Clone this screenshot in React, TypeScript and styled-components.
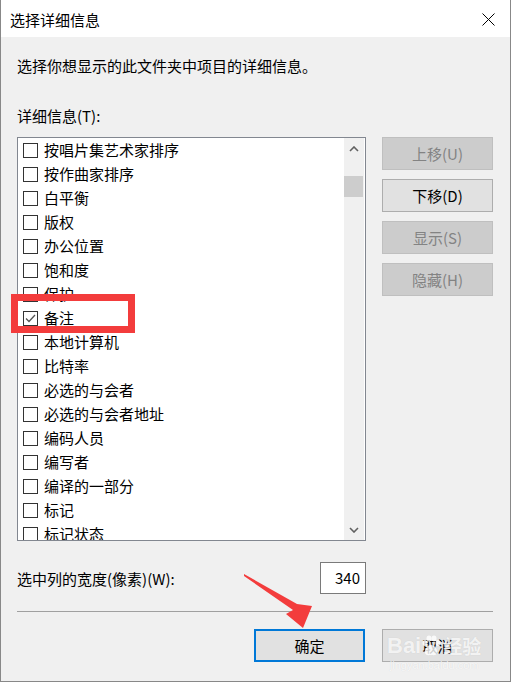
import styled, { createGlobalStyle } from 'styled-components';

const GlobalStyle = createGlobalStyle`
  html, body {
    margin: 0;
    padding: 0;
    background: #fff;
  }
  body {
    font-family: "Noto Sans CJK SC", "Noto Sans", sans-serif;
  }
`;

const Window = styled.div`
  position: relative;
  width: 511px;
  height: 682px;
  box-sizing: border-box;
  border: 1px solid #888;
  border-top: none;
  background: #f0f0f0;
  display: flex;
  flex-direction: column;
  overflow: hidden;
  font-size: 15px;
  color: #000;
`;

const TitleBar = styled.div`
  height: 37px;
  flex: none;
  box-sizing: border-box;
  background: #fff;
  display: flex;
  align-items: center;
  justify-content: space-between;
  padding: 2px 15px 0 9px;
`;

const Title = styled.div`
  line-height: 20px;
`;

const Content = styled.div`
  display: flex;
  flex-direction: column;
  padding: 0 16px;
`;

const Text = styled.div<{ $top: number }>`
  margin-top: ${(p) => p.$top}px;
  line-height: 20px;
  white-space: nowrap;
`;

const MainRow = styled.div`
  margin-top: 11px;
  display: flex;
  height: 404px;
`;

const ListBox = styled.div`
  width: 349px;
  height: 404px;
  box-sizing: border-box;
  border: 1px solid #828790;
  background: #fff;
  display: flex;
`;

const Rows = styled.div`
  width: 326px;
  overflow: hidden;
`;

const Row = styled.div`
  height: 24px;
  display: flex;
  align-items: center;
  padding-left: 5px;
  white-space: nowrap;
  line-height: 24px;
`;

const Box = styled.span`
  width: 15px;
  height: 15px;
  box-sizing: border-box;
  border: 1px solid #333;
  background: #fff;
  margin-right: 6px;
  display: flex;
  align-items: center;
  justify-content: center;
  flex: none;
`;

const ScrollBar = styled.div`
  width: 20px;
  margin-right: 1px;
  background: #f0f0f0;
  display: flex;
  flex-direction: column;
`;

const ScrollArrow = styled.div`
  height: 21px;
  display: flex;
  align-items: center;
  justify-content: center;
  flex: none;
`;

const Track = styled.div`
  flex: 1;
`;

const Thumb = styled.div`
  margin-top: 17px;
  width: 19px;
  height: 21px;
  background: #cdcdcd;
`;

const SideButtons = styled.div`
  margin-left: 16px;
  display: flex;
  flex-direction: column;
  gap: 9px;
`;

const Button = styled.button<{ $disabled?: boolean; $primary?: boolean }>`
  width: 111px;
  height: 33px;
  box-sizing: border-box;
  margin: 0;
  padding: 0;
  font-family: inherit;
  font-size: 15px;
  line-height: 20px;
  background: ${(p) => (p.$disabled ? '#cccccc' : '#e1e1e1')};
  border: ${(p) =>
    p.$primary ? '2px solid #0078d7' : p.$disabled ? '1px solid #bfbfbf' : '1px solid #adadad'};
  color: ${(p) => (p.$disabled ? '#838383' : '#000')};
`;

const WidthRow = styled.div`
  margin-top: 21px;
  width: 349px;
  display: flex;
  align-items: center;
  justify-content: space-between;
`;

const NumberInput = styled.div`
  width: 46px;
  height: 32px;
  box-sizing: border-box;
  border: 1px solid #7a7a7a;
  background: #fff;
  text-align: right;
  padding-right: 5px;
  line-height: 29px;
`;

const Separator = styled.div`
  margin-top: 17px;
  width: 476px;
  height: 1px;
  background: #a0a0a0;
`;

const Footer = styled.div`
  margin-top: 17px;
  display: flex;
  justify-content: flex-end;
  gap: 17px;
  padding-right: 1px;
`;

const Highlight = styled.div`
  position: absolute;
  left: 10px;
  top: 294px;
  width: 124px;
  height: 39px;
  box-sizing: border-box;
  border: 7px solid #f33c3c;
  pointer-events: none;
`;

const ArrowMark = styled.svg`
  position: absolute;
  left: 240px;
  top: 570px;
`;

const Watermark = styled.div`
  position: absolute;
  left: 386px;
  top: 634px;
  color: rgba(255, 255, 255, 0.8);
  text-shadow: 0 0 1px rgba(0, 0, 0, 0.12);
  pointer-events: none;
  display: flex;
  flex-direction: column;
  align-items: center;
`;

const WatermarkMain = styled.div`
  display: flex;
  align-items: center;
  font-family: "Liberation Sans", Arial, sans-serif;
  font-weight: bold;
  font-size: 22px;
  line-height: 24px;
`;

const WatermarkCn = styled.span`
  font-family: "Noto Sans CJK SC", sans-serif;
  font-size: 19px;
  margin-left: 2px;
`;

const WatermarkUrl = styled.div`
  font-family: "Liberation Sans", Arial, sans-serif;
  font-size: 11px;
  line-height: 12px;
  margin-top: 1px;
`;

const items = [
  '按唱片集艺术家排序',
  '按作曲家排序',
  '白平衡',
  '版权',
  '办公位置',
  '饱和度',
  '保护',
  '备注',
  '本地计算机',
  '比特率',
  '必选的与会者',
  '必选的与会者地址',
  '编码人员',
  '编写者',
  '编译的一部分',
  '标记',
  '标记状态',
];

const Chevron = ({ up }: { up?: boolean }) => (
  <svg width="10" height="6" viewBox="0 0 10 6">
    <polyline
      points={up ? '1,5 5,1 9,5' : '1,1 5,5 9,1'}
      fill="none"
      stroke="#606060"
      strokeWidth="1.6"
    />
  </svg>
);

export default function App() {
  return (
    <>
      <GlobalStyle />
      <Window>
        <TitleBar>
          <Title>选择详细信息</Title>
          <svg width="13" height="13" viewBox="0 0 13 13">
            <path d="M0.5 0.5 L12.5 12.5 M12.5 0.5 L0.5 12.5" stroke="#000" strokeWidth="1" />
          </svg>
        </TitleBar>
        <Content>
          <Text $top={19}>选择你想显示的此文件夹中项目的详细信息。</Text>
          <Text $top={30}>详细信息(T):</Text>
          <MainRow>
            <ListBox>
              <Rows>
                {items.map((name) => (
                  <Row key={name}>
                    <Box>
                      {name === '备注' && (
                        <svg width="11" height="9" viewBox="0 0 11 9">
                          <polyline points="1,4.5 4,7.5 10,1" fill="none" stroke="#555" strokeWidth="1.3" />
                        </svg>
                      )}
                    </Box>
                    {name}
                  </Row>
                ))}
              </Rows>
              <ScrollBar>
                <ScrollArrow>
                  <Chevron up />
                </ScrollArrow>
                <Track>
                  <Thumb />
                </Track>
                <ScrollArrow>
                  <Chevron />
                </ScrollArrow>
              </ScrollBar>
            </ListBox>
            <SideButtons>
              <Button $disabled>上移(U)</Button>
              <Button>下移(D)</Button>
              <Button $disabled>显示(S)</Button>
              <Button $disabled>隐藏(H)</Button>
            </SideButtons>
          </MainRow>
          <WidthRow>
            <span>选中列的宽度(像素)(W):</span>
            <NumberInput>340</NumberInput>
          </WidthRow>
          <Separator />
          <Footer>
            <Button $primary>确定</Button>
            <Button>取消</Button>
          </Footer>
        </Content>
        <Highlight />
        <ArrowMark width="75" height="62" viewBox="0 0 75 62">
          <polygon points="3,4 56,34 71,36 62,58 45,44 52,40 3,6" fill="#f33c3c" />
        </ArrowMark>
        <Watermark>
          <WatermarkMain>
            Bai
            <svg width="20" height="22" viewBox="0 0 20 22">
              <g fill="rgba(255,255,255,0.8)">
                <ellipse cx="4" cy="8" rx="2.5" ry="3" />
                <ellipse cx="8" cy="3.5" rx="2.5" ry="3" />
                <ellipse cx="13" cy="3.5" rx="2.5" ry="3" />
                <ellipse cx="17" cy="8" rx="2.5" ry="3" />
                <path d="M10 10 C6 10 3 15 4 18 C5 21 8 20 10 20 C12 20 15 21 16 18 C17 15 14 10 10 10 Z" />
              </g>
            </svg>
            <WatermarkCn>经验</WatermarkCn>
          </WatermarkMain>
          <WatermarkUrl>jingyan.baidu.com</WatermarkUrl>
        </Watermark>
      </Window>
    </>
  );
}
